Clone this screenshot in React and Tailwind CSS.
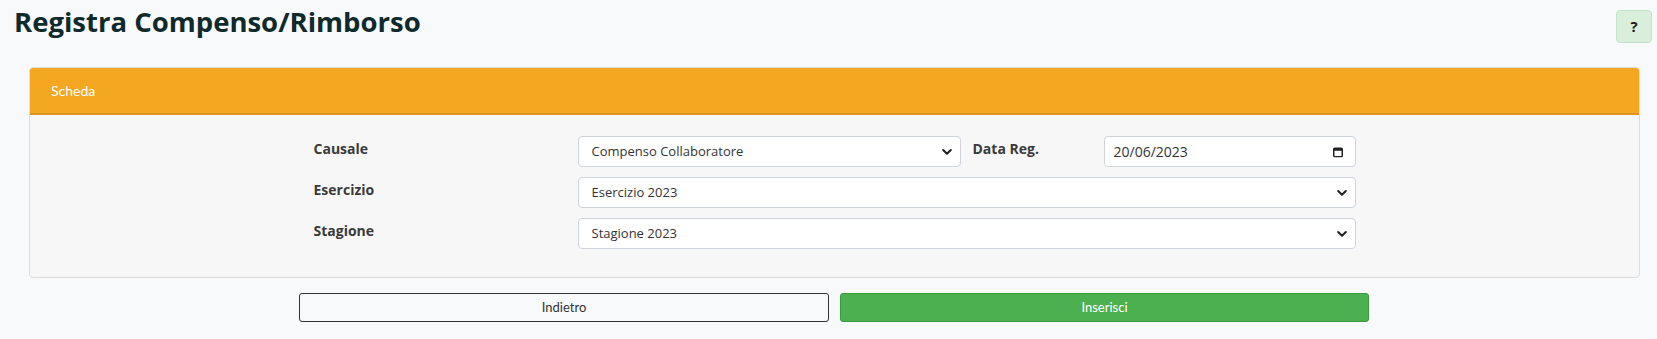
import React from 'react';

const Chevron = () => (
  <svg className="pointer-events-none absolute right-[9px] top-1/2 -translate-y-1/2" width="10" height="7" viewBox="0 0 10 7">
    <path d="M1.2 1.5 L5 5.2 L8.8 1.5" fill="none" stroke="#222" strokeWidth="2" strokeLinecap="round" strokeLinejoin="round" />
  </svg>
);

const CalendarIcon = () => (
  <svg className="pointer-events-none absolute right-[13px] top-1/2 -translate-y-1/2" width="10" height="11" viewBox="0 0 10 11">
    <rect x="0.75" y="1.75" width="8.5" height="8.5" rx="1" fill="none" stroke="#222" strokeWidth="1.5" />
    <rect x="0.75" y="1.75" width="8.5" height="2.5" fill="#222" />
  </svg>
);

const Select = ({ value, className }) => (
  <div className={`relative ${className}`}>
    <select
      defaultValue={value}
      className="w-full h-[31px] appearance-none bg-white border border-[#cfd4da] rounded-[4px] pl-[13px] pr-8 text-[13px] text-[#333] outline-none"
    >
      <option>{value}</option>
    </select>
    <Chevron />
  </div>
);

const Label = ({ children, className = '' }) => (
  <label className={`pt-[2px] text-[14px] font-bold text-[#3a3a3a] ${className}`}>{children}</label>
);

export default function App() {
  return (
    <div className="min-h-screen bg-[#f8f9fb] font-['Open_Sans',sans-serif]">
      <div className="flex justify-between items-start h-[67px] pl-[14px] pr-[5px] pt-[7px]">
        <h1 className="text-[27.5px] leading-[30px] font-bold text-[#10292b]">Registra Compenso/Rimborso</h1>
        <button className="w-[36px] h-[33px] mt-[3px] rounded-[4px] bg-[#d9eedb] border border-[#c5e3c8] text-[15px] font-bold text-[#1a1a1a]">
          ?
        </button>
      </div>

      <div className="ml-[29px] w-[1611px] border border-[#dcdcdc] rounded-[4px] bg-[#f7f7f7] overflow-hidden">
        <div className="h-[47px] flex items-center px-[21px] bg-[#f4a720] border-b-2 border-[#dc961c] text-[14px] text-white font-['Lato',sans-serif]">
          Scheda
        </div>
        <div className="pt-[21px] pb-[28px]">
          <div className="w-[1042px] mx-auto flex flex-col gap-[10px]">
            <div className="flex items-start">
              <Label className="w-[264px]">Causale</Label>
              <Select value="Compenso Collaboratore" className="w-[383px]" />
              <Label className="w-[131px] ml-[12px]">Data Reg.</Label>
              <div className="relative w-[252px]">
                <input
                  readOnly
                  value="20/06/2023"
                  className="w-full h-[31px] bg-white border border-[#cfd4da] rounded-[4px] pl-[9px] text-[14px] text-[#333] outline-none"
                />
                <CalendarIcon />
              </div>
            </div>
            <div className="flex items-start">
              <Label className="w-[264px]">Esercizio</Label>
              <Select value="Esercizio 2023" className="flex-1" />
            </div>
            <div className="flex items-start">
              <Label className="w-[264px]">Stagione</Label>
              <Select value="Stagione 2023" className="flex-1" />
            </div>
          </div>
        </div>
      </div>

      <div className="flex justify-center gap-[11px] mt-[15px] pl-[11px] font-['Lato',sans-serif]">
        <button className="w-[530px] h-[29px] rounded-[3px] border border-[#333] bg-transparent text-[13px] text-[#333]">
          Indietro
        </button>
        <button className="w-[529px] h-[29px] rounded-[3px] border border-[#3a9a3e] bg-[#4caf50] text-[13px] text-white">
          Inserisci
        </button>
      </div>
    </div>
  );
}
